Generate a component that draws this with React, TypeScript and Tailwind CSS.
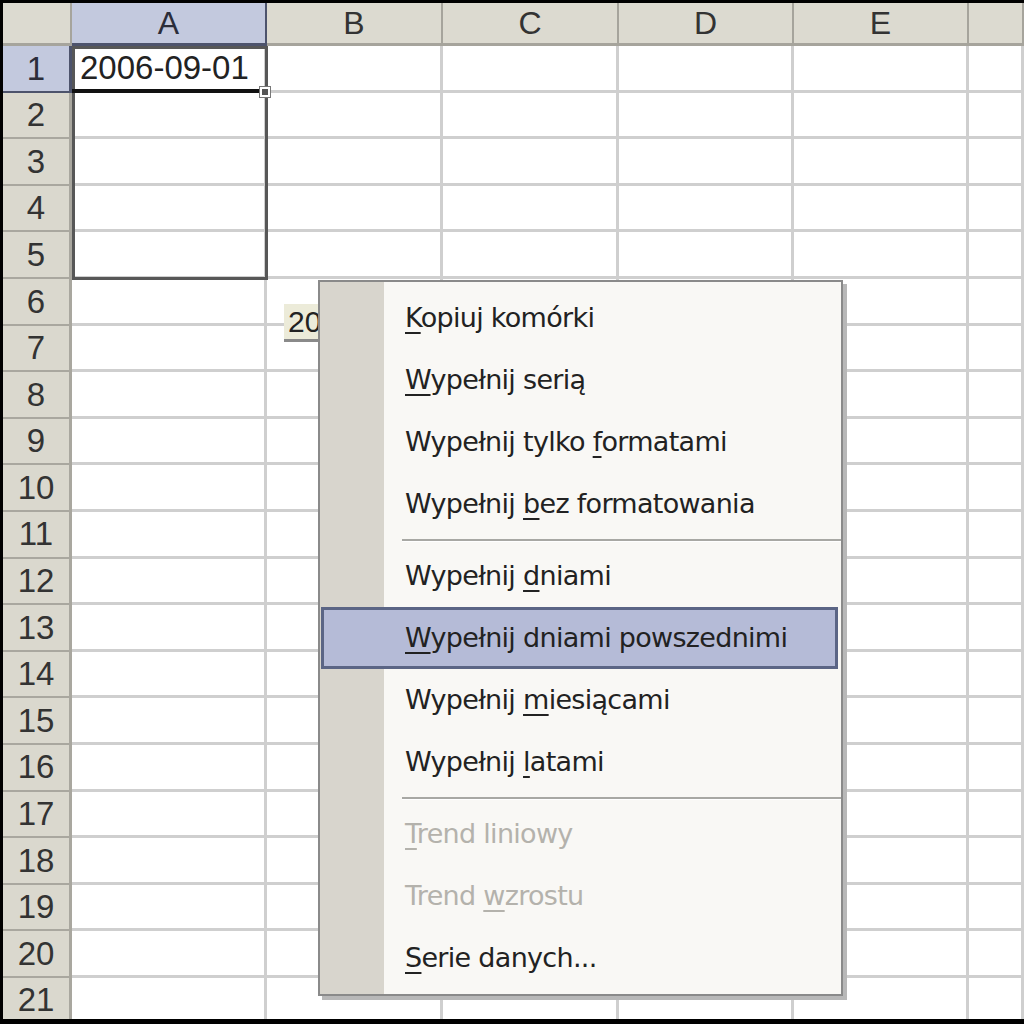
import React from 'react';

const cols = ['A', 'B', 'C', 'D', 'E', ''];
const rows = Array.from({ length: 21 }, (_, i) => i + 1);

type Item = { pre: string; key: string; post: string; disabled?: boolean; active?: boolean };

const groups: Item[][] = [
  [
    { pre: '', key: 'K', post: 'opiuj komórki' },
    { pre: '', key: 'W', post: 'ypełnij serią' },
    { pre: 'Wypełnij tylko ', key: 'f', post: 'ormatami' },
    { pre: 'Wypełnij ', key: 'b', post: 'ez formatowania' },
  ],
  [
    { pre: 'Wypełnij ', key: 'd', post: 'niami' },
    { pre: '', key: 'W', post: 'ypełnij dniami powszednimi', active: true },
    { pre: 'Wypełnij ', key: 'm', post: 'iesiącami' },
    { pre: 'Wypełnij ', key: 'l', post: 'atami' },
  ],
  [
    { pre: '', key: 'T', post: 'rend liniowy', disabled: true },
    { pre: 'Trend ', key: 'w', post: 'zrostu', disabled: true },
    { pre: '', key: 'S', post: 'erie danych...' },
  ],
];

function MenuItem({ item }: { item: Item }) {
  const color = item.disabled ? 'text-[#b4b2ac]' : 'text-[#222222]';
  return (
    <div className="relative flex h-[62px] items-center">
      {item.active && (
        <div className="absolute inset-y-0 left-[1px] right-[3px] border-[3px] border-[#5b6585] bg-[#b5bbd7]" />
      )}
      <span className={`relative pl-[85px] text-[27px] tracking-[-0.7px] ${color}`}>
        {item.pre}
        <span className="underline decoration-2 underline-offset-[5px]">{item.key}</span>
        {item.post}
      </span>
    </div>
  );
}

function ContextMenu() {
  return (
    <div className="absolute left-[315px] top-[277px] w-[525px] border-2 border-[#8a8a8a] bg-[#f9f8f5] shadow-[4px_4px_0_#b8b8b8] font-['DejaVu_Sans',sans-serif]">
      <div className="absolute inset-y-0 left-0 w-[64px] bg-[#d8d5cd]" />
      <div className="relative py-[5px]">
        {groups.map((g, gi) => (
          <div key={gi}>
            {gi > 0 && (
              <div className="flex h-[10px] items-center pl-[82px]">
                <div className="h-[2px] w-full bg-[#a8a8a4] shadow-[0_1px_0_#ffffff]" />
              </div>
            )}
            {g.map((it, ii) => (
              <MenuItem key={ii} item={it} />
            ))}
          </div>
        ))}
      </div>
    </div>
  );
}

export default function App() {
  return (
    <div className="relative h-[1024px] w-[1024px] overflow-hidden bg-black pl-[3px] pt-[3px] pb-[5px] font-['Liberation_Sans',Arial,sans-serif]">
      <div className="relative h-full w-full overflow-hidden bg-white">
        <div className="grid grid-cols-[69px_195px_176px_176px_175px_175px_1fr] grid-rows-[43px_repeat(21,46.6px)]">
          <div className="border-b-[3px] border-r-2 border-[#a6a49c] bg-[#dcdad0]" />
          {cols.map((c, i) => (
            <div
              key={c + i}
              className={
                i === 0
                  ? 'flex items-center justify-center border-b-[3px] border-r-2 border-[#4d536c] bg-[#c3c9de] text-[32px] text-[#2b2d3a]'
                  : 'flex items-center justify-center border-b-[3px] border-r-2 border-[#a6a49c] bg-[#dcdad0] text-[32px] text-[#333]'
              }
            >
              {c}
            </div>
          ))}
          {rows.map((r) => (
            <React.Fragment key={r}>
              <div
                className={
                  r === 1
                    ? 'flex items-center justify-center border-b-2 border-r-[3px] border-[#4d536c] bg-[#c3c9de] text-[33px] text-[#2b2d3a]'
                    : 'flex items-center justify-center border-b-2 border-r-[3px] border-[#a9a79f] bg-[#dad8ce] text-[33px] text-[#333]'
                }
              >
                {r}
              </div>
              {cols.map((c, i) => (
                <div
                  key={c + i}
                  className="flex items-center overflow-hidden border-b-[3px] border-r-[3px] border-[#cfcfcf] px-[8px] text-[33px] text-[#222]"
                >
                  {r === 1 && i === 0 ? '2006-09-01' : ''}
                </div>
              ))}
            </React.Fragment>
          ))}
        </div>

        {/* selection A1:A5 */}
        <div className="absolute left-[69px] top-[43px] h-[234px] w-[196px] border-[3px] border-[#575757]" />
        <div className="absolute left-[69px] top-[86px] h-[4px] w-[190px] bg-[#111]" />
        <div className="absolute left-[257px] top-[84px] h-[10px] w-[10px] border-2 border-white bg-[#555] outline outline-1 outline-[#777]" />

        {/* auto fill options tag */}
        <div className="absolute left-[281px] top-[301px] flex h-[38px] w-[50px] items-center border-b-[3px] border-[#8a8a8a] bg-[#ecebd9] pl-[4px] text-[30px] text-[#222]">
          20
        </div>

        <ContextMenu />
      </div>
    </div>
  );
}
